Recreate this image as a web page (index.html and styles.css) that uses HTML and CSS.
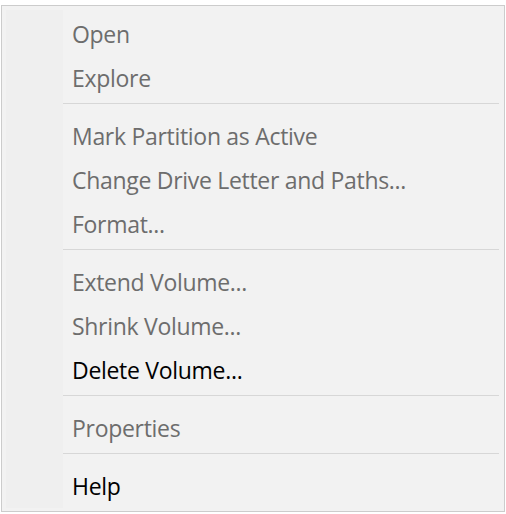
FILE: index.html
```html
<!DOCTYPE html>
<html lang="en">
  <head>
    <meta charset="UTF-8" />
    <title>Volume menu</title>
    <link rel="stylesheet" href="styles.css">
  </head>
  <body>
    <div class="menu">
      <ul class="items">
        <li class="item disabled">Open</li>
        <li class="item disabled">Explore</li>
        <li class="sep"></li>
        <li class="item disabled">Mark Partition as Active</li>
        <li class="item disabled">Change Drive Letter and Paths...</li>
        <li class="item disabled">Format...</li>
        <li class="sep"></li>
        <li class="item disabled">Extend Volume...</li>
        <li class="item disabled">Shrink Volume...</li>
        <li class="item">Delete Volume...</li>
        <li class="sep"></li>
        <li class="item disabled">Properties</li>
        <li class="sep"></li>
        <li class="item">Help</li>
      </ul>
    </div>
  </body>
</html>
```

FILE: styles.css
```css
* {
  margin: 0;
  padding: 0;
  box-sizing: border-box;
}
body {
  background: #fff;
  font-family: "Segoe UI", "Open Sans", "Noto Sans", sans-serif;
}
.menu {
  width: 504px;
  height: 507px;
  margin: 5px 0 0 1px;
  border: 1px solid #cccccc;
  background: #f2f2f2;
  padding: 4px;
}
.items {
  list-style: none;
  padding-top: 3px;
  height: 498px;
  background: linear-gradient(to right, #efefef 57px, #f2f2f2 57px);
}
.item {
  height: 44px;
  line-height: 42px;
  padding-left: 66px;
  font-size: 23px;
  letter-spacing: -0.3px;
  color: #000;
  white-space: nowrap;
}
.item.disabled {
  color: #6d6d6d;
}
.sep {
  height: 1px;
  margin: 2px 1px 11px 57px;
  background: #d7d7d7;
}
```
